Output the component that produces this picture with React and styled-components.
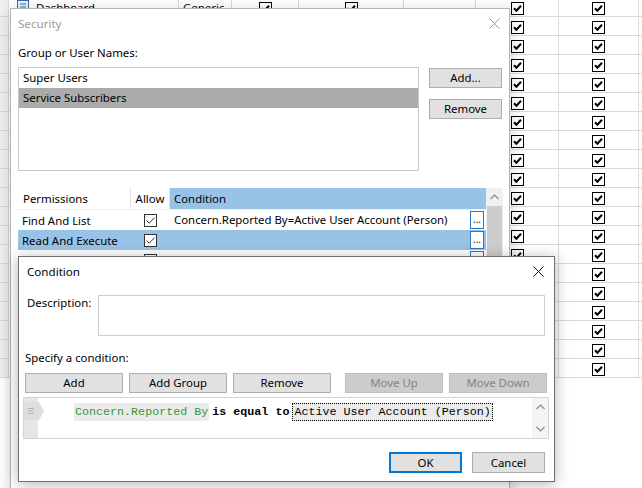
import React from 'react';
import styled, { createGlobalStyle } from 'styled-components';

const GlobalStyle = createGlobalStyle`
  html, body {
    margin: 0;
    padding: 0;
    background: #fff;
  }
  body {
    font-family: "Noto Sans", "Segoe UI", sans-serif;
    font-size: 11.4px;
    color: #000;
  }
  * {
    box-sizing: border-box;
  }
`;

// only the first row's text shows past the dialogs, the rest stay blank
const bgRows = Array.from({ length: 20 }, (_, i) => (i === 0 ? 'Dashboard' : ''));

const permissions = [
  { name: 'Find And List', condition: 'Concern.Reported By=Active User Account (Person)' },
  { name: 'Read And Execute', condition: '', selected: true },
  { name: 'Create', condition: '' },
];

const OldCheck = () => (
  <svg width="13" height="13" viewBox="0 0 13 13">
    <rect x="0.5" y="0.5" width="12" height="12" fill="#fff" stroke="#000" />
    <path d="M3 6.3 L5.4 8.8 L10 3.8" fill="none" stroke="#000" strokeWidth="2" />
  </svg>
);

const ThinCheck = () => (
  <svg width="13" height="13" viewBox="0 0 13 13">
    <rect x="0.5" y="0.5" width="12" height="12" fill="#fff" stroke="#333" />
    <path d="M2.6 6.6 L5.2 9.2 L10.6 3.6" fill="none" stroke="#333" strokeWidth="1" />
  </svg>
);

const CloseIcon = ({ color }) => (
  <svg width="11" height="11" viewBox="0 0 11 11">
    <path d="M0.5 0.5 L10.5 10.5 M10.5 0.5 L0.5 10.5" stroke={color} strokeWidth="1" />
  </svg>
);

const DocIcon = () => (
  <svg width="12" height="14" viewBox="0 0 12 14">
    <rect x="0.5" y="0.5" width="11" height="13" fill="#e8f0fa" stroke="#3a6ea5" />
    <path d="M3 4 H9 M3 7 H9 M3 10 H7" stroke="#3a6ea5" strokeWidth="1" />
  </svg>
);

const Chevron = ({ up }) => (
  <svg width="9" height="6" viewBox="0 0 9 6">
    <path d={up ? 'M0.5 5 L4.5 1 L8.5 5' : 'M0.5 1 L4.5 5 L8.5 1'} fill="none" stroke="#8a8a8a" strokeWidth="1.2" />
  </svg>
);

const LineMarker = () => (
  <svg width="21" height="18" viewBox="0 0 21 18">
    <path d="M0 0 H15 L20 9 L15 18 H0 Z" fill="#dedede" />
    <path d="M4 6.5 H10 M4 9 H10 M4 11.5 H10" stroke="#b4b4b4" strokeWidth="1" />
  </svg>
);

const App = () => {
  return (
    <Desktop>
      <GlobalStyle />
      <BgGrid>
        {bgRows.map((name, i) => (
          <React.Fragment key={i}>
            <BgCell $strip />
            <BgCell $pad={8}>
              <DocIcon />
              <BgName>{name}</BgName>
            </BgCell>
            <BgCell $pad={4}>{name ? 'Generic' : ''}</BgCell>
            <BgCell $center><OldCheck /></BgCell>
            <BgCell $center><OldCheck /></BgCell>
            <BgCell />
            <BgCell $center><OldCheck /></BgCell>
            <BgCell $center><OldCheck /></BgCell>
            <BgCell $last />
          </React.Fragment>
        ))}
      </BgGrid>

      <Window $x={10} $y={8} $w={500} $h={500}>
        <TitleBar $inactive>
          <span>Security</span>
          <CloseIcon color="#9a9a9a" />
        </TitleBar>
        <SecurityBody>
          <FieldLabel>Group or User Names:</FieldLabel>
          <ListRow>
            <ListBox>
              <ListItem>Super Users</ListItem>
              <ListItem $selected>Service Subscribers</ListItem>
            </ListBox>
            <SideButtons>
              <Button $w={73}>Add...</Button>
              <Button $w={73}>Remove</Button>
            </SideButtons>
          </ListRow>

          <PermTable>
            <PermGrid>
              <HeadCell>Permissions</HeadCell>
              <HeadCell $center>Allow</HeadCell>
              <HeadCell $blue>Condition</HeadCell>
              {permissions.map((p) => (
                <React.Fragment key={p.name}>
                  <PermCell $selected={p.selected}>{p.name}</PermCell>
                  <PermCell $selected={p.selected} $center><ThinCheck /></PermCell>
                  <PermCell $selected={p.selected}>
                    <CondText>{p.condition}</CondText>
                    <DotButton>...</DotButton>
                  </PermCell>
                </React.Fragment>
              ))}
            </PermGrid>
            <ScrollBar>
              <ScrollArrow><Chevron up /></ScrollArrow>
              <ScrollThumb />
            </ScrollBar>
          </PermTable>
        </SecurityBody>
      </Window>

      <Window $x={18} $y={256} $w={537} $h={226} $active>
        <TitleBar $pad="0 10px 1px 8px">
          <span>Condition</span>
          <CloseIcon color="#111" />
        </TitleBar>
        <ConditionBody>
          <DescRow>
            <DescLabel>Description:</DescLabel>
            <DescBox />
          </DescRow>
          <SpecifyLabel>Specify a condition:</SpecifyLabel>
          <ActionRow>
            <Button $w={98}>Add</Button>
            <Button $w={98}>Add Group</Button>
            <Button $w={98}>Remove</Button>
            <Button $w={98} $disabled $gapBefore>Move Up</Button>
            <Button $w={98} $disabled>Move Down</Button>
          </ActionRow>
          <Editor>
            <Gutter>
              <MarkerSpot><LineMarker /></MarkerSpot>
            </Gutter>
            <EditorLines>
              <ExprLine>
                <Token $field>Concern.Reported By</Token>
                <Token $op>is equal to</Token>
                <Token $value>Active User Account (Person)</Token>
              </ExprLine>
            </EditorLines>
            <EditorScroll>
              <Chevron up />
              <Chevron />
            </EditorScroll>
          </Editor>
          <Footer>
            <Button $w={73} $h={21} $default>OK</Button>
            <Button $w={73} $h={21}>Cancel</Button>
          </Footer>
        </ConditionBody>
      </Window>
    </Desktop>
  );
};

const Desktop = styled.div`
  position: relative;
  width: 642px;
  height: 488px;
  overflow: hidden;
  background: #fff;
`;

const BgGrid = styled.div`
  display: grid;
  grid-template-columns: 9px 170px 53px 67px 105px 72px 83px 80px 3px;
  grid-auto-rows: 19px;
  margin-top: -2px;
`;

const BgCell = styled.div`
  display: flex;
  align-items: center;
  justify-content: ${(p) => (p.$center ? 'center' : 'flex-start')};
  gap: 7px;
  padding: ${(p) => (p.$center ? '2px 0 0 0' : `0 0 0 ${p.$pad || 0}px`)};
  border-right: ${(p) => (p.$last ? 'none' : '1px solid #d9d9d9')};
  border-bottom: 1px solid #d9d9d9;
  background: ${(p) => (p.$strip ? '#f0f0f0' : '#fff')};
  white-space: nowrap;
  overflow: hidden;
`;

const BgName = styled.span`
  color: #000;
`;

const Window = styled.div`
  position: absolute;
  left: ${(p) => p.$x}px;
  top: ${(p) => p.$y}px;
  width: ${(p) => p.$w}px;
  height: ${(p) => p.$h}px;
  display: flex;
  flex-direction: column;
  background: #fff;
  border: 1px solid ${(p) => (p.$active ? '#6f6f6f' : '#b4b4b4')};
  box-shadow: 0 2px 14px rgba(0, 0, 0, ${(p) => (p.$active ? 0.3 : 0.18)});
`;

const TitleBar = styled.div`
  height: 30px;
  flex: none;
  display: flex;
  align-items: center;
  justify-content: space-between;
  padding: ${(p) => p.$pad || '0 9px 2px 7px'};
  color: ${(p) => (p.$inactive ? '#9a9a9a' : '#000')};
  font-size: 11.6px;
`;

const SecurityBody = styled.div`
  display: flex;
  flex-direction: column;
  padding: 0 6px 0 7px;
`;

const FieldLabel = styled.div`
  margin-top: 6px;
  line-height: 16px;
`;

const ListRow = styled.div`
  display: flex;
  gap: 10px;
  margin-top: 6px;
`;

const ListBox = styled.div`
  width: 401px;
  height: 104px;
  border: 1px solid #c8c8c8;
  display: flex;
  flex-direction: column;
`;

const ListItem = styled.div`
  height: 20px;
  flex: none;
  display: flex;
  align-items: center;
  padding: 0 0 2px 4px;
  background: ${(p) => (p.$selected ? '#ababab' : 'transparent')};
`;

const SideButtons = styled.div`
  display: flex;
  flex-direction: column;
  gap: 11px;
  margin-top: 1px;
`;

const Button = styled.div`
  width: ${(p) => p.$w}px;
  height: ${(p) => p.$h || 20}px;
  display: flex;
  align-items: center;
  justify-content: center;
  padding-bottom: 1px;
  background: ${(p) => (p.$disabled ? '#cccccc' : '#e1e1e1')};
  border: ${(p) => (p.$default ? '2px solid #0078d7' : `1px solid ${p.$disabled ? '#bfbfbf' : '#adadad'}`)};
  color: ${(p) => (p.$disabled ? '#838383' : '#000')};
  margin-left: ${(p) => (p.$gapBefore ? '8px' : 0)};
`;

const PermTable = styled.div`
  display: flex;
  width: 485px;
  margin-top: 17px;
  height: 260px;
`;

const PermGrid = styled.div`
  flex: 1;
  display: grid;
  grid-template-columns: 113px 39px 1fr;
  grid-template-rows: 22px;
  grid-auto-rows: 20px;
  align-content: start;
`;

const HeadCell = styled.div`
  display: flex;
  align-items: center;
  justify-content: ${(p) => (p.$center ? 'center' : 'flex-start')};
  padding: 0 0 1px ${(p) => (p.$center ? 0 : p.$blue ? '4px' : '5px')};
  background: ${(p) => (p.$blue ? '#99c3e6' : '#fff')};
  border-right: ${(p) => (p.$blue ? 'none' : '1px solid #e3e3e3')};
  border-bottom: 1px solid #f0f0f0;
`;

const PermCell = styled.div`
  display: flex;
  align-items: center;
  justify-content: ${(p) => (p.$center ? 'center' : 'flex-start')};
  padding-left: ${(p) => (p.$center ? 0 : '4px')};
  background: ${(p) => (p.$selected ? '#99c3e6' : '#fff')};
  white-space: nowrap;
  overflow: hidden;
`;

const CondText = styled.span`
  flex: 1;
  overflow: hidden;
  padding-bottom: 1px;
`;

const DotButton = styled.div`
  width: 14px;
  height: 18px;
  margin-right: 2px;
  display: flex;
  align-items: center;
  justify-content: center;
  background: #fff;
  border: 1px solid #2b76c2;
  font-size: 10px;
  line-height: 1;
  padding-bottom: 3px;
  color: #222;
`;

const ScrollBar = styled.div`
  width: 17px;
  display: flex;
  flex-direction: column;
  background: #f0f0f0;
`;

const ScrollArrow = styled.div`
  height: 18px;
  display: flex;
  align-items: center;
  justify-content: center;
`;

const ScrollThumb = styled.div`
  height: 200px;
  margin: 0 1px;
  background: #cdcdcd;
`;

const ConditionBody = styled.div`
  display: flex;
  flex-direction: column;
  padding: 0 5px 0 4px;
`;

const DescRow = styled.div`
  display: flex;
  margin-top: 8px;
`;

const DescLabel = styled.div`
  width: 75px;
  padding-left: 4px;
  line-height: 16px;
`;

const DescBox = styled.div`
  width: 447px;
  height: 41px;
  border: 1px solid #cfcfcf;
`;

const SpecifyLabel = styled.div`
  margin-top: 14px;
  padding-left: 2px;
  line-height: 16px;
`;

const ActionRow = styled.div`
  display: flex;
  gap: 6px;
  margin-top: 7px;
  padding-left: 2px;
`;

const Editor = styled.div`
  display: flex;
  height: 42px;
  margin-top: 4px;
  border: 1px solid #d4d4d4;
`;

const Gutter = styled.div`
  width: 14px;
  background: #e6e6e6;
  position: relative;
`;

const MarkerSpot = styled.div`
  position: absolute;
  left: 0;
  top: 4px;
  line-height: 0;
`;

const EditorLines = styled.div`
  flex: 1;
  padding: 5px 0 0 36px;
`;

const ExprLine = styled.div`
  display: flex;
  align-items: stretch;
  height: 18px;
  font-family: "Liberation Mono", "DejaVu Sans Mono", monospace;
  font-size: 11.7px;
`;

const Token = styled.span`
  display: flex;
  align-items: center;
  padding: 0 ${(p) => (p.$op ? '3px' : '1px')};
  background: ${(p) => (p.$op ? '#fff' : '#ebebeb')};
  color: ${(p) => (p.$field ? '#3a963a' : '#000')};
  font-weight: ${(p) => (p.$op ? 700 : 400)};
  border: ${(p) => (p.$value ? '1px dotted #000' : 'none')};
`;

const EditorScroll = styled.div`
  width: 16px;
  display: flex;
  flex-direction: column;
  align-items: center;
  justify-content: space-between;
  padding: 6px 0 6px;
  background: #f4f4f4;
`;

const Footer = styled.div`
  display: flex;
  justify-content: flex-end;
  gap: 10px;
  margin-top: 13px;
  padding-right: 4px;
`;

export default App;
